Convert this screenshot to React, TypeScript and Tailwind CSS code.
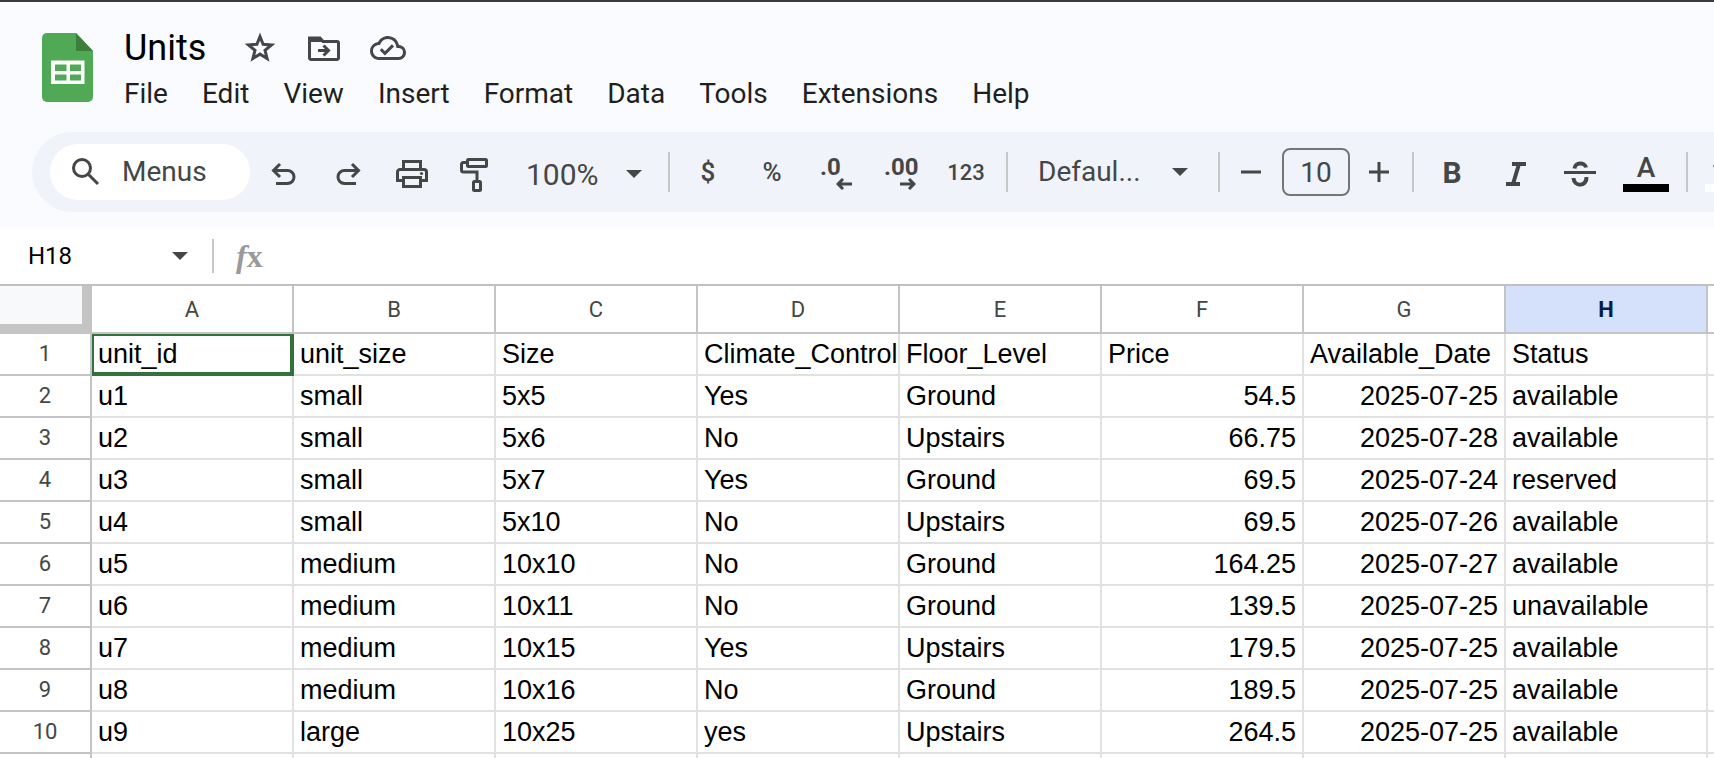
import { ReactNode } from 'react';
import { MdOutlineCloudDone } from 'react-icons/md';

const MENUS = ['File', 'Edit', 'View', 'Insert', 'Format', 'Data', 'Tools', 'Extensions', 'Help'];
const COLUMNS = ['A', 'B', 'C', 'D', 'E', 'F', 'G', 'H'];
const ACTIVE_COLUMN = 'H';

const ROWS: string[][] = [
  ['unit_id', 'unit_size', 'Size', 'Climate_Control', 'Floor_Level', 'Price', 'Available_Date', 'Status'],
  ['u1', 'small', '5x5', 'Yes', 'Ground', '54.5', '2025-07-25', 'available'],
  ['u2', 'small', '5x6', 'No', 'Upstairs', '66.75', '2025-07-28', 'available'],
  ['u3', 'small', '5x7', 'Yes', 'Ground', '69.5', '2025-07-24', 'reserved'],
  ['u4', 'small', '5x10', 'No', 'Upstairs', '69.5', '2025-07-26', 'available'],
  ['u5', 'medium', '10x10', 'No', 'Ground', '164.25', '2025-07-27', 'available'],
  ['u6', 'medium', '10x11', 'No', 'Ground', '139.5', '2025-07-25', 'unavailable'],
  ['u7', 'medium', '10x15', 'Yes', 'Upstairs', '179.5', '2025-07-25', 'available'],
  ['u8', 'medium', '10x16', 'No', 'Ground', '189.5', '2025-07-25', 'available'],
  ['u9', 'large', '10x25', 'yes', 'Upstairs', '264.5', '2025-07-25', 'available'],
];

function SheetsLogo() {
  return (
    <svg width="52" height="70" viewBox="0 0 52 70" aria-hidden="true">
      <path d="M5 0H34L51 18V64a5 5 0 0 1-5 5H5a5 5 0 0 1-5-5V5a5 5 0 0 1 5-5z" fill="#4fa955" />
      <path d="M34 0L51 18H34z" fill="#3b7f3b" />
      <path
        d="M9 27.500H42.500V51H9zM13 31.500V38H24.500V31.500zM28 31.500V38H39V31.500zM13 41.500V47.500H24.500V41.500zM28 41.500V47.500H39V41.500z"
        fill="#fff"
        fillRule="evenodd"
      />
    </svg>
  );
}

// `top` adds empty room above the drawing
function Stroke({ w, h, top = 0, children }: { w: number; h: number; top?: number; children: ReactNode }) {
  return (
    <svg
      width={w}
      height={h + top}
      viewBox={`0 ${-top} ${w} ${h + top}`}
      fill="none"
      stroke="currentColor"
      strokeWidth="3"
      aria-hidden="true"
      className="shrink-0"
    >
      {children}
    </svg>
  );
}

function Caret() {
  return (
    <svg width="16" height="8" viewBox="0 0 16 8" fill="currentColor" aria-hidden="true">
      <path d="M0 0H16L8 8z" />
    </svg>
  );
}

function ToolButton({ label, wide, children }: { label: string; wide?: boolean; children: ReactNode }) {
  return (
    <button
      type="button"
      aria-label={label}
      className={`${wide ? 'w-16' : 'w-15'} h-14 shrink-0 flex items-center justify-center rounded-lg hover:bg-black/5`}
    >
      {children}
    </button>
  );
}

function Separator() {
  return <div className="mx-1 h-10 w-0.5 shrink-0 bg-[#c7c7c7]" />;
}

function Header() {
  return (
    <header className="flex gap-[30px] pl-[42px] pt-[26px]">
      <div className="pt-[5px]">
        <SheetsLogo />
      </div>
      <div>
        <div className="flex h-10 items-center text-[#444746]">
          <h1 className="text-[36px] leading-10 text-black">Units</h1>
          <div className="ml-9 flex items-center gap-7">
            <button type="button" aria-label="Star">
              <Stroke w={36} h={36}>
                <path d="M18 6.500L21.100 14.300L29.500 14.900L23 20.300L25.100 28.500L18 24.100L10.900 28.500L13 20.300L6.500 14.900L14.900 14.300z" />
              </Stroke>
            </button>
            <button type="button" aria-label="Move">
              <Stroke w={36} h={36}>
                <path d="M3.500 8H14L17 11.500H31a1.500 1.500 0 0 1 1.500 1.500V28a1.500 1.500 0 0 1-1.500 1.500H5A1.500 1.500 0 0 1 3.500 28z" />
                <path d="M3 7H14L18 12H3z" fill="currentColor" stroke="none" />
                <path d="M12 20.500H23M17.500 15.500L22.500 20.500L17.500 25.500" />
              </Stroke>
            </button>
            <button type="button" aria-label="Saved to Drive">
              <MdOutlineCloudDone size={36} />
            </button>
          </div>
        </div>
        <nav className="flex gap-[34px] pt-1.5 text-[28px] leading-10 text-[#1f1f1f]">
          {MENUS.map((m) => (
            <button key={m} type="button">
              {m}
            </button>
          ))}
        </nav>
      </div>
    </header>
  );
}

function Toolbar() {
  return (
    <div className="ml-8 mt-[18px] flex h-20 shrink-0 items-center gap-1 overflow-hidden rounded-l-full bg-[#f0f3f9] pl-[18px] text-[#444746]">
      <label className="flex h-14 w-50 shrink-0 items-center rounded-full bg-white pl-5">
        <Stroke w={32} h={32}>
          <circle cx="12" cy="12" r="8.500" />
          <path d="M18 18L28 28" />
        </Stroke>
        <input
          aria-label="Search the menus"
          placeholder="Menus"
          className="ml-5 w-28 bg-transparent text-[28px] outline-none placeholder:text-[#444746]"
        />
      </label>

      <ToolButton label="Undo">
        <Stroke w={28} h={28} top={6}>
          <path d="M10 3L3.500 9.500L10 16M4 9.500H17.500a6.500 6.500 0 0 1 0 13H6" />
        </Stroke>
      </ToolButton>
      <ToolButton label="Redo">
        <Stroke w={28} h={28} top={6}>
          <path d="M18 3L24.500 9.500L18 16M24 9.500H10.500a6.500 6.500 0 0 0 0 13H22" />
        </Stroke>
      </ToolButton>
      <ToolButton label="Print">
        <Stroke w={32} h={28} top={4}>
          <path d="M7.500 9V1.500H24.500V9" />
          <path d="M7.500 20.500H1.500V12a2.500 2.500 0 0 1 2.500-2.500H28a2.500 2.500 0 0 1 2.500 2.500V20.500H24.500" />
          <path d="M7.500 17.500H24.500V26.500H7.500z" />
          <circle cx="25.500" cy="13.500" r="1.600" fill="currentColor" stroke="none" />
        </Stroke>
      </ToolButton>
      <ToolButton label="Paint format">
        <Stroke w={32} h={34} top={6}>
          <rect x="7.500" y="1.500" width="19" height="7" rx="1" />
          <path d="M7 4.500H3.500a2 2 0 0 0-2 2V12a2 2 0 0 0 2 2H17V23" />
          <rect x="13.500" y="23.500" width="7" height="9" rx="1" />
        </Stroke>
      </ToolButton>

      <div className="relative flex shrink-0 items-center pt-1">
        <select aria-label="Zoom" className="h-14 w-[150px] appearance-none bg-transparent pl-4 text-[30px]">
          <option>100%</option>
        </select>
        <span className="pointer-events-none absolute right-[18px]">
          <Caret />
        </span>
      </div>
      <Separator />

      <ToolButton label="Format as currency">
        <span className="text-[26px] font-medium">$</span>
      </ToolButton>
      <ToolButton label="Format as percent">
        <span className="text-[26px] font-medium">%</span>
      </ToolButton>
      <ToolButton label="Decrease decimal places">
        <span className="flex w-8 flex-col pt-0.5 text-left">
          <span className="text-[24px] leading-[22px] font-bold">.0</span>
          <span className="self-end">
            <Stroke w={16} h={12}>
              <path d="M16 6H2M7 1L2 6L7 11" />
            </Stroke>
          </span>
        </span>
      </ToolButton>
      <ToolButton label="Increase decimal places">
        <span className="flex w-8 flex-col pt-0.5 text-left">
          <span className="text-[24px] leading-[22px] font-bold">.00</span>
          <span className="self-end">
            <Stroke w={16} h={12}>
              <path d="M0 6H14M9 1L14 6L9 11" />
            </Stroke>
          </span>
        </span>
      </ToolButton>
      <ToolButton label="More formats" wide>
        <span className="text-[22px] font-medium">123</span>
      </ToolButton>
      <Separator />

      <div className="relative flex shrink-0 items-center">
        <select aria-label="Font" className="h-14 w-[194px] appearance-none bg-transparent pl-[22px] text-[28px]">
          <option>Defaul...</option>
        </select>
        <span className="pointer-events-none absolute right-[22px]">
          <Caret />
        </span>
      </div>
      <Separator />

      <button type="button" aria-label="Decrease font size" className="flex h-14 w-[50px] shrink-0 items-center justify-center pr-1">
        <Stroke w={20} h={20}>
          <path d="M0 10H20" />
        </Stroke>
      </button>
      <input
        aria-label="Font size"
        defaultValue="10"
        className="h-12 w-[68px] shrink-0 rounded-lg border-2 border-[#747775] bg-transparent text-center text-[28px] outline-none"
      />
      <button type="button" aria-label="Increase font size" className="flex h-14 w-[50px] shrink-0 items-center justify-center">
        <Stroke w={20} h={20}>
          <path d="M0 10H20M10 0V20" />
        </Stroke>
      </button>
      <Separator />

      <ToolButton label="Bold">
        <span className="text-[30px] font-bold">B</span>
      </ToolButton>
      <ToolButton label="Italic">
        <svg width="20" height="28" viewBox="0 -4 20 28" fill="none" stroke="currentColor" strokeWidth="4" aria-hidden="true">
          <path d="M6 2H20M0 22H14M13 2L7 22" />
        </svg>
      </ToolButton>
      <ToolButton label="Strikethrough">
        <Stroke w={32} h={26} top={3}>
          <path d="M0 11.500H32" />
          <path d="M10.500 7.500C11 1 21 1 22 6.500M9.500 17C10 26 23 26 22.500 16" strokeWidth="4" />
        </Stroke>
      </ToolButton>
      <ToolButton label="Text color" wide>
        <span className="flex flex-col items-center">
          <span className="text-[28px] leading-8 font-medium">A</span>
          <span className="h-2 w-[46px] bg-black" />
        </span>
      </ToolButton>
      <Separator />
      <ToolButton label="Fill color" wide>
        <span className="flex flex-col items-center gap-1">
          <Stroke w={32} h={28}>
            <path d="M13 2L25 14L14 25L3 14L15 4" />
          </Stroke>
          <span className="h-2 w-[46px] bg-white" />
        </span>
      </ToolButton>
    </div>
  );
}

function FormulaBar() {
  return (
    <div className="mt-4 flex h-14 shrink-0 items-center bg-white text-[#444746]">
      <input
        aria-label="Name box"
        defaultValue="H18"
        className="w-[144px] bg-transparent pl-7 text-[24px] text-black outline-none"
      />
      <button type="button" aria-label="Named ranges" className="flex h-10 w-[68px] items-center pl-7">
        <Caret />
      </button>
      <div className="h-[34px] w-0.5 bg-[#c7c7c7]" />
      <label
        htmlFor="formula"
        className="w-14 pl-[22px] font-['Liberation_Serif',serif] text-[32px] leading-8 font-bold text-[#9a9a9a]"
      >
        <i>f</i>x
      </label>
      <input id="formula" className="min-w-0 flex-1 bg-transparent text-[24px] text-black outline-none" />
    </div>
  );
}

function Grid() {
  return (
    <div className="min-h-0 flex-1 overflow-hidden border-t-2 border-[#c0c0c0] bg-white">
      <table className="w-[1912px] table-fixed border-separate border-spacing-0">
        <colgroup>
          <col className="w-[92px]" />
          {COLUMNS.map((c) => (
            <col key={c} className="w-[202px]" />
          ))}
          <col />
        </colgroup>
        <thead>
          <tr className="h-12 text-[22px] text-[#444746]">
            <td className="border-r-10 border-b-10 border-[#c4c4c4] bg-[#f8f9fa] p-0" />
            {COLUMNS.map((c) => (
              <th
                key={c}
                scope="col"
                className={`border-r-2 border-b-2 border-[#c4c4c4] p-0 ${
                  c === ACTIVE_COLUMN ? 'bg-[#d5e1fb] font-bold text-[#041e49]' : 'font-normal'
                }`}
              >
                {c}
              </th>
            ))}
            <td className="border-b-2 border-[#c4c4c4]" />
          </tr>
        </thead>
        <tbody>
          {ROWS.map((row, r) => (
            <tr key={r} className="h-[42px]">
              <th scope="row" className="border-r-2 border-b-2 border-[#c4c4c4] p-0 text-[22px] leading-8 font-normal text-[#444746]">
                {r + 1}
              </th>
              {row.map((value, c) => (
                <td
                  key={c}
                  className={`relative border-r-2 border-b-2 border-[#e1e1e1] px-1.5 py-0 font-['Liberation_Sans',Arial,sans-serif] text-[27px] leading-8 whitespace-nowrap text-black ${
                    r > 0 && (c === 5 || c === 6) ? 'text-right' : ''
                  }`}
                >
                  {value}
                  {r === 0 && c === 0 && (
                    <span className="pointer-events-none absolute top-0 -right-0.5 -bottom-0.5 left-0 border-t-2 border-r-4 border-b-4 border-l-2 border-[#33723d]" />
                  )}
                </td>
              ))}
              <td className="border-b-2 border-[#e1e1e1]" />
            </tr>
          ))}
          <tr className="h-[42px]">
            <td className="border-r-2 border-[#c4c4c4]" />
            {COLUMNS.map((c) => (
              <td key={c} className="border-r-2 border-[#e1e1e1]" />
            ))}
            <td />
          </tr>
        </tbody>
      </table>
    </div>
  );
}

export default function App() {
  return (
    <div className="flex h-screen flex-col overflow-hidden border-t-2 border-[#3c3c3c] bg-[#f9fbfe] font-[Roboto,sans-serif]">
      <Header />
      <Toolbar />
      <FormulaBar />
      <Grid />
    </div>
  );
}
